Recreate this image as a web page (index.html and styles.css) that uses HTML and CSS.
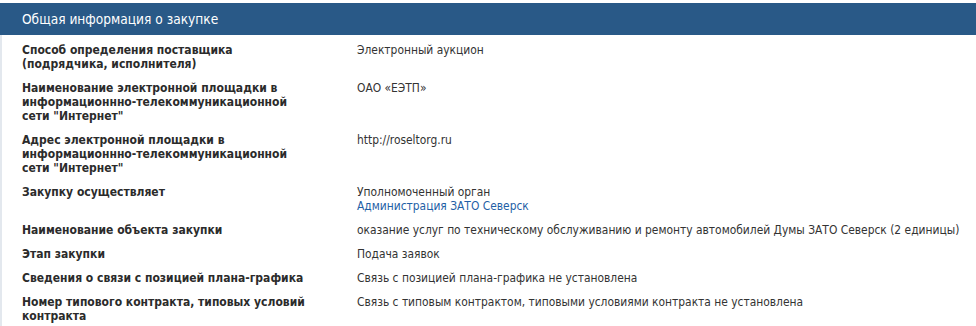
FILE: index.html
```html
<!DOCTYPE html>
<html lang="ru">
<head>
<meta charset="utf-8">
<title>Общая информация о закупке</title>
<link rel="stylesheet" href="styles.css">
</head>
<body>
<section class="panel">
  <h2 class="panel-title">Общая информация о закупке</h2>
  <div class="panel-body">
    <div class="row">
      <div class="label">Способ определения поставщика (подрядчика, исполнителя)</div>
      <div class="value">Электронный аукцион</div>
    </div>
    <div class="row">
      <div class="label">Наименование электронной площадки в информационнно-телекоммуникационной сети "Интернет"</div>
      <div class="value">ОАО «ЕЭТП»</div>
    </div>
    <div class="row">
      <div class="label">Адрес электронной площадки в информационнно-телекоммуникационной сети "Интернет"</div>
      <div class="value">http://roseltorg.ru</div>
    </div>
    <div class="row">
      <div class="label">Закупку осуществляет</div>
      <div class="value">Уполномоченный орган<br><a class="link" href="#">Администрация ЗАТО Северск</a></div>
    </div>
    <div class="row">
      <div class="label">Наименование объекта закупки</div>
      <div class="value">оказание услуг по техническому обслуживанию и ремонту автомобилей Думы ЗАТО Северск (2 единицы)</div>
    </div>
    <div class="row">
      <div class="label">Этап закупки</div>
      <div class="value">Подача заявок</div>
    </div>
    <div class="row">
      <div class="label">Сведения о связи с позицией плана-графика</div>
      <div class="value">Связь с позицией плана-графика не установлена</div>
    </div>
    <div class="row">
      <div class="label">Номер типового контракта, типовых условий контракта</div>
      <div class="value">Связь с типовым контрактом, типовыми условиями контракта не установлена</div>
    </div>
  </div>
</section>
</body>
</html>
```
FILE: styles.css
```css
html, body {
  margin: 0;
  padding: 0;
  background: #ffffff;
}

body {
  font-family: "DejaVu Sans Condensed", "DejaVu Sans", sans-serif;
  font-size: 12px;
  color: #333333;
}

.panel {
  margin-top: 3px;
}

.panel-title {
  margin: 0;
  height: 32px;
  padding-left: 22px;
  background: #295987;
  color: #ffffff;
  font-size: 13.6px;
  font-weight: normal;
  line-height: 32px;
}

.panel-body {
  border-left: 2px solid #e3e8ee;
  padding-top: 3px;
}

.row {
  display: grid;
  grid-template-columns: 335px 1fr;
  padding: 5px 0 5px 20px;
  line-height: 14px;
}

.label {
  font-weight: bold;
  color: #2b2b2b;
  width: 292px;
}

.value {
  color: #333333;
  font-size: 11.9px;
}

.link {
  color: #1f5fa6;
  text-decoration: none;
}
```
